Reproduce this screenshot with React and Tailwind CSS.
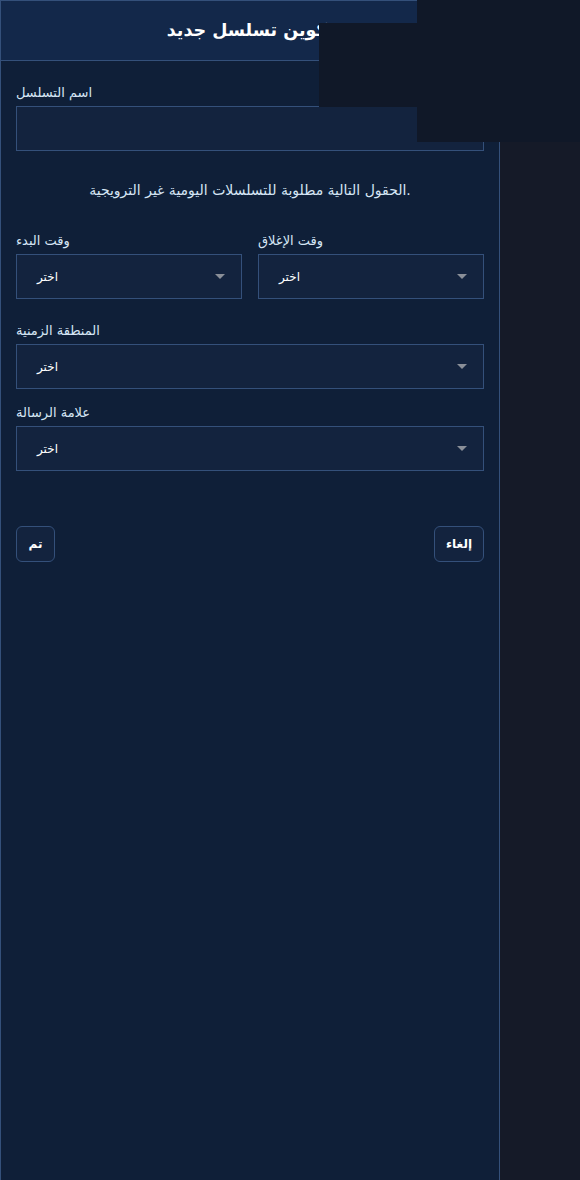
import React from "react";

function Field({ label, children, className = "" }) {
  return (
    <div className={`flex flex-col ${className}`}>
      <label className="text-[13px] leading-[18px] text-[#d6e6f5] mb-[4px]">{label}</label>
      {children}
    </div>
  );
}

function SelectBox() {
  return (
    <div className="h-[45px] border border-[#34507a] bg-[#13233e] flex items-center justify-between pl-[20px] pr-[16px]">
      <span className="text-[12px] text-white">اختر</span>
      <span className="w-0 h-0 border-l-[5px] border-r-[5px] border-t-[5px] border-l-transparent border-r-transparent border-t-[#8a8f98]"></span>
    </div>
  );
}

function App() {
  return (
    <div
      className="relative w-[580px] h-[1180px] bg-[#151a28] flex"
      style={{ fontFamily: '"DejaVu Sans", sans-serif' }}
    >
      <div className="w-[500px] h-full bg-[#0f1f38] border-l border-r border-t border-[#34507a] flex flex-col">
        <div className="h-[60px] bg-[#13284a] border-b border-[#34507a] flex items-center justify-center">
          <h1 className="text-[17.5px] font-bold text-white">تكوين تسلسل جديد</h1>
        </div>

        <div className="px-[15px] pt-[23px]">
          <Field label="اسم التسلسل">
            <div className="h-[45px] border border-[#34507a] bg-[#13233e]"></div>
          </Field>

          <p className="text-center text-[14px] leading-[20px] text-[#d6e6f5] mt-[29px] mb-[32px]">
            الحقول التالية مطلوبة للتسلسلات اليومية غير الترويجية.
          </p>

          <div className="grid grid-cols-2 gap-[16px]">
            <Field label="وقت البدء">
              <SelectBox />
            </Field>
            <Field label="وقت الإغلاق">
              <SelectBox />
            </Field>
          </div>

          <Field label="المنطقة الزمنية" className="mt-[23px]">
            <SelectBox />
          </Field>

          <Field label="علامة الرسالة" className="mt-[15px]">
            <SelectBox />
          </Field>

          <div className="flex justify-between mt-[55px]">
            <button className="h-[36px] w-[39px] rounded-md border border-[#34507a] bg-[#13233e] text-[12px] font-bold text-white">
              تم
            </button>
            <button className="h-[36px] w-[50px] rounded-md border border-[#34507a] bg-[#13233e] text-[12px] font-bold text-white">
              إلغاء
            </button>
          </div>
        </div>
      </div>

      <div className="absolute left-[319px] top-[23px] w-[98px] h-[84px] bg-[#101828]"></div>
      <div className="absolute left-[417px] top-0 w-[163px] h-[142px] bg-[#101828]"></div>
    </div>
  );
}

export default App;
